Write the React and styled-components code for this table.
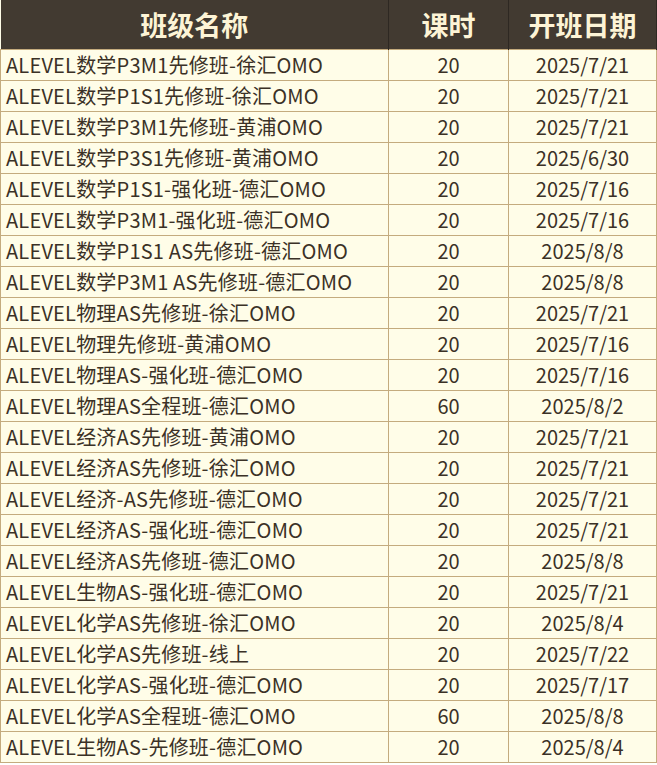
import styled, { createGlobalStyle } from "styled-components";

const GlobalStyle = createGlobalStyle`
  body {
    margin: 0;
    background: #ffffff;
    font-family: "Noto Sans CJK SC", "Noto Sans", sans-serif;
  }
`;

const rows = [
  ["ALEVEL数学P3M1先修班-徐汇OMO", "20", "2025/7/21"],
  ["ALEVEL数学P1S1先修班-徐汇OMO", "20", "2025/7/21"],
  ["ALEVEL数学P3M1先修班-黄浦OMO", "20", "2025/7/21"],
  ["ALEVEL数学P3S1先修班-黄浦OMO", "20", "2025/6/30"],
  ["ALEVEL数学P1S1-强化班-德汇OMO", "20", "2025/7/16"],
  ["ALEVEL数学P3M1-强化班-德汇OMO", "20", "2025/7/16"],
  ["ALEVEL数学P1S1 AS先修班-德汇OMO", "20", "2025/8/8"],
  ["ALEVEL数学P3M1 AS先修班-德汇OMO", "20", "2025/8/8"],
  ["ALEVEL物理AS先修班-徐汇OMO", "20", "2025/7/21"],
  ["ALEVEL物理先修班-黄浦OMO", "20", "2025/7/16"],
  ["ALEVEL物理AS-强化班-德汇OMO", "20", "2025/7/16"],
  ["ALEVEL物理AS全程班-德汇OMO", "60", "2025/8/2"],
  ["ALEVEL经济AS先修班-黄浦OMO", "20", "2025/7/21"],
  ["ALEVEL经济AS先修班-徐汇OMO", "20", "2025/7/21"],
  ["ALEVEL经济-AS先修班-德汇OMO", "20", "2025/7/21"],
  ["ALEVEL经济AS-强化班-德汇OMO", "20", "2025/7/21"],
  ["ALEVEL经济AS先修班-德汇OMO", "20", "2025/8/8"],
  ["ALEVEL生物AS-强化班-德汇OMO", "20", "2025/7/21"],
  ["ALEVEL化学AS先修班-徐汇OMO", "20", "2025/8/4"],
  ["ALEVEL化学AS先修班-线上", "20", "2025/7/22"],
  ["ALEVEL化学AS-强化班-德汇OMO", "20", "2025/7/17"],
  ["ALEVEL化学AS全程班-德汇OMO", "60", "2025/8/8"],
  ["ALEVEL生物AS-先修班-德汇OMO", "20", "2025/8/4"],
];

const Table = styled.table`
  width: 656px;
  border-collapse: collapse;
  table-layout: fixed;
  background: #fffde8;
  color: #3b3126;
`;

const HeadCell = styled.th`
  height: 49px;
  padding: 0;
  background: #423a31;
  color: #fdf4d6;
  font-size: 27px;
  font-weight: 700;
  text-align: center;
  border-left: 1px solid #2e2822;
  border-right: 1px solid #2e2822;
  &:first-child {
    border-left: none;
  }
`;

const Cell = styled.td`
  height: 30px;
  padding: 0 0 0 ${(p) => (p.$left ? "5px" : "0")};
  font-size: 20px;
  font-weight: 400;
  line-height: 30px;
  letter-spacing: ${(p) => (p.$left ? "0.2px" : "0")};
  text-align: ${(p) => (p.$left ? "left" : "center")};
  white-space: nowrap;
  border: 1px solid #c4ab7e;
`;

export default function App() {
  return (
    <>
      <GlobalStyle />
      <Table>
        <colgroup>
          <col style={{ width: 388 }} />
          <col style={{ width: 120 }} />
          <col style={{ width: 148 }} />
        </colgroup>
        <thead>
          <tr>
            <HeadCell>班级名称</HeadCell>
            <HeadCell>课时</HeadCell>
            <HeadCell>开班日期</HeadCell>
          </tr>
        </thead>
        <tbody>
          {rows.map(([name, hours, date], i) => (
            <tr key={i}>
              <Cell $left>{name}</Cell>
              <Cell>{hours}</Cell>
              <Cell>{date}</Cell>
            </tr>
          ))}
        </tbody>
      </Table>
    </>
  );
}
